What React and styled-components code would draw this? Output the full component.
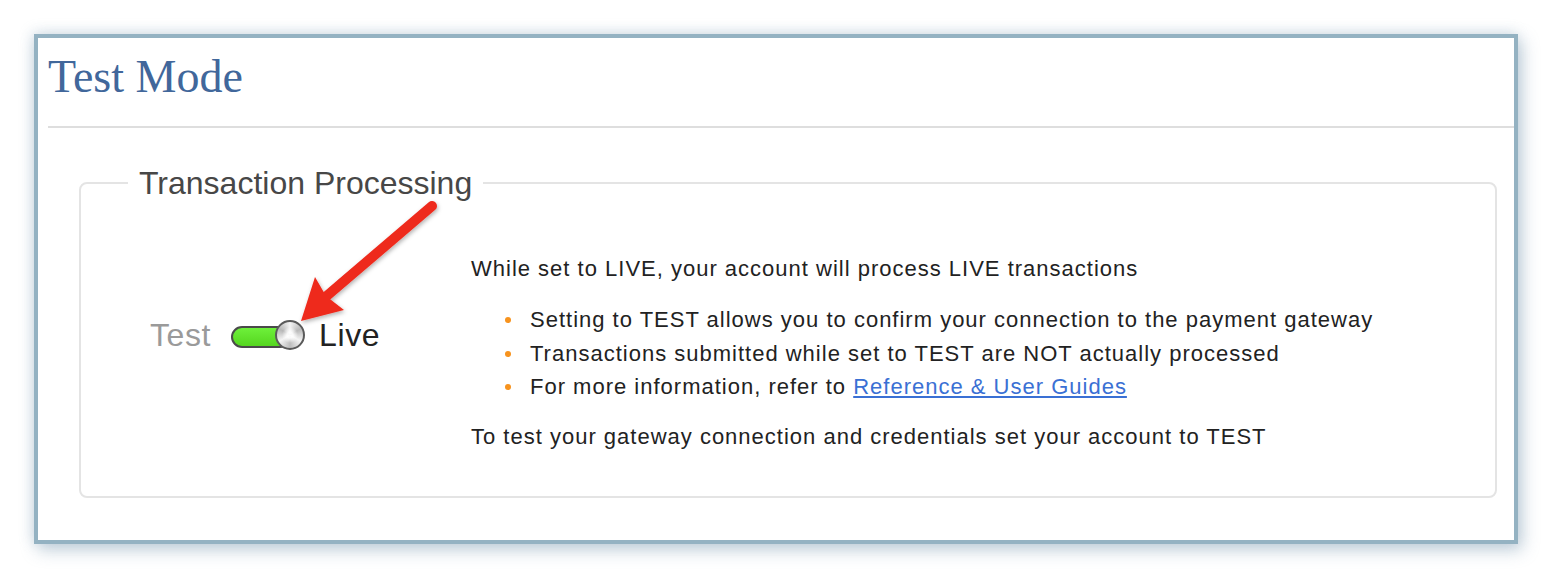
import styled, { createGlobalStyle } from 'styled-components';

const Global = createGlobalStyle`
  html, body {
    margin: 0;
    padding: 0;
    background: #ffffff;
  }
  body {
    font-family: "Liberation Sans", Arial, sans-serif;
  }
`;

const Page = styled.div`
  padding: 34px 0 0 34px;
  width: 1552px;
  height: 578px;
  box-sizing: border-box;
`;

const Frame = styled.div`
  position: relative;
  box-sizing: border-box;
  width: 1484px;
  height: 510px;
  border: 4px solid #94b2c2;
  background: #fff;
  box-shadow: 4px 6px 16px rgba(120, 150, 175, 0.45), -2px -2px 12px rgba(150, 175, 195, 0.3);
`;

const Title = styled.h1`
  margin: 16px 0 0 10px;
  font-family: "Liberation Serif", "Times New Roman", serif;
  font-weight: normal;
  font-size: 46px;
  line-height: 46px;
  color: #41679b;
`;

const Divider = styled.hr`
  margin: 26px 0 0 10px;
  border: 0;
  height: 2px;
  background: #dedede;
`;

const Fieldset = styled.fieldset`
  margin: 39px 17px 0 41px;
  padding: 0;
  border: 2px solid #e4e4e4;
  border-radius: 8px;
  min-inline-size: 0;
`;

const Legend = styled.legend`
  margin-left: 47px;
  padding: 0 11px;
  font-size: 32px;
  line-height: 32px;
  color: #474747;
`;

const Body = styled.div`
  display: flex;
  padding: 53px 0 42px 69px;
`;

const SwitchRow = styled.div`
  display: flex;
  align-items: center;
  width: 321px;
  margin-top: 63px;
  align-self: flex-start;
  height: 40px;
`;

const SwitchLabel = styled.span`
  font-size: 32px;
  letter-spacing: 0.6px;
  color: ${({ $active }) => ($active ? '#222' : '#9a9a9a')};
`;

const Track = styled.span`
  position: relative;
  display: inline-block;
  width: 56px;
  height: 18px;
  margin: 4px 28px 0 20px;
  border: 2px solid #4a4a4a;
  border-radius: 11px;
  background: linear-gradient(#6ef03a, #55d61f);
`;

const Knob = styled.span`
  position: absolute;
  right: -16px;
  top: -8px;
  width: 30px;
  height: 30px;
  box-sizing: border-box;
  border: 2px solid #5a5a5a;
  border-radius: 50%;
  background:
    radial-gradient(circle at 50% 50%, rgba(255, 255, 255, 0.9) 0 3px, transparent 8px),
    conic-gradient(#f4f4f4, #b9b9b9, #f4f4f4, #bdbdbd, #f4f4f4, #b7b7b7, #f4f4f4);
`;

const Info = styled.div`
  font-size: 22px;
  letter-spacing: 1px;
  line-height: 34px;
  color: #222;
`;

const Para = styled.p`
  margin: 0;
`;

const Bullets = styled.ul`
  margin: 17px 0 16px;
  padding: 0 0 0 59px;
  list-style: none;
`;

const Bullet = styled.li`
  position: relative;
  line-height: 33.5px;

  &::before {
    content: '';
    position: absolute;
    left: -25px;
    top: 14px;
    width: 6px;
    height: 6px;
    border-radius: 50%;
    background: #f7931e;
  }
`;

const Link = styled.a`
  color: #3a70d4;
  text-decoration: underline;
`;

const Annotation = styled.svg`
  position: absolute;
  left: 0;
  top: 0;
  pointer-events: none;
`;

export default function App() {
  return (
    <Page>
      <Global />
      <Frame>
        <Title>Test Mode</Title>
        <Divider />
        <Fieldset>
          <Legend>Transaction Processing</Legend>
          <Body>
            <SwitchRow>
              <SwitchLabel>Test</SwitchLabel>
              <Track>
                <Knob />
              </Track>
              <SwitchLabel $active>Live</SwitchLabel>
            </SwitchRow>
            <Info>
              <Para>While set to LIVE, your account will process LIVE transactions</Para>
              <Bullets>
                <Bullet>Setting to TEST allows you to confirm your connection to the payment gateway</Bullet>
                <Bullet>Transactions submitted while set to TEST are NOT actually processed</Bullet>
                <Bullet>
                  For more information, refer to <Link href="#">Reference &amp; User Guides</Link>
                </Bullet>
              </Bullets>
              <Para>To test your gateway connection and credentials set your account to TEST</Para>
            </Info>
          </Body>
        </Fieldset>
        <Annotation width="1476" height="502" viewBox="38 38 1476 502">
          <defs>
            <filter id="sh" x="-20%" y="-20%" width="140%" height="140%">
              <feDropShadow dx="1" dy="2" stdDeviation="2" floodColor="#000" floodOpacity="0.3" />
            </filter>
          </defs>
          <line x1="362" y1="263" x2="339" y2="282" stroke="#2a55b0" strokeWidth="4" />
          <g filter="url(#sh)">
            <line x1="432" y1="206" x2="322" y2="300" stroke="#ee2a1c" strokeWidth="10" strokeLinecap="round" />
            <polygon points="301,321 315,277 326,296 344,310" fill="#ee2a1c" />
          </g>
        </Annotation>
      </Frame>
    </Page>
  );
}
